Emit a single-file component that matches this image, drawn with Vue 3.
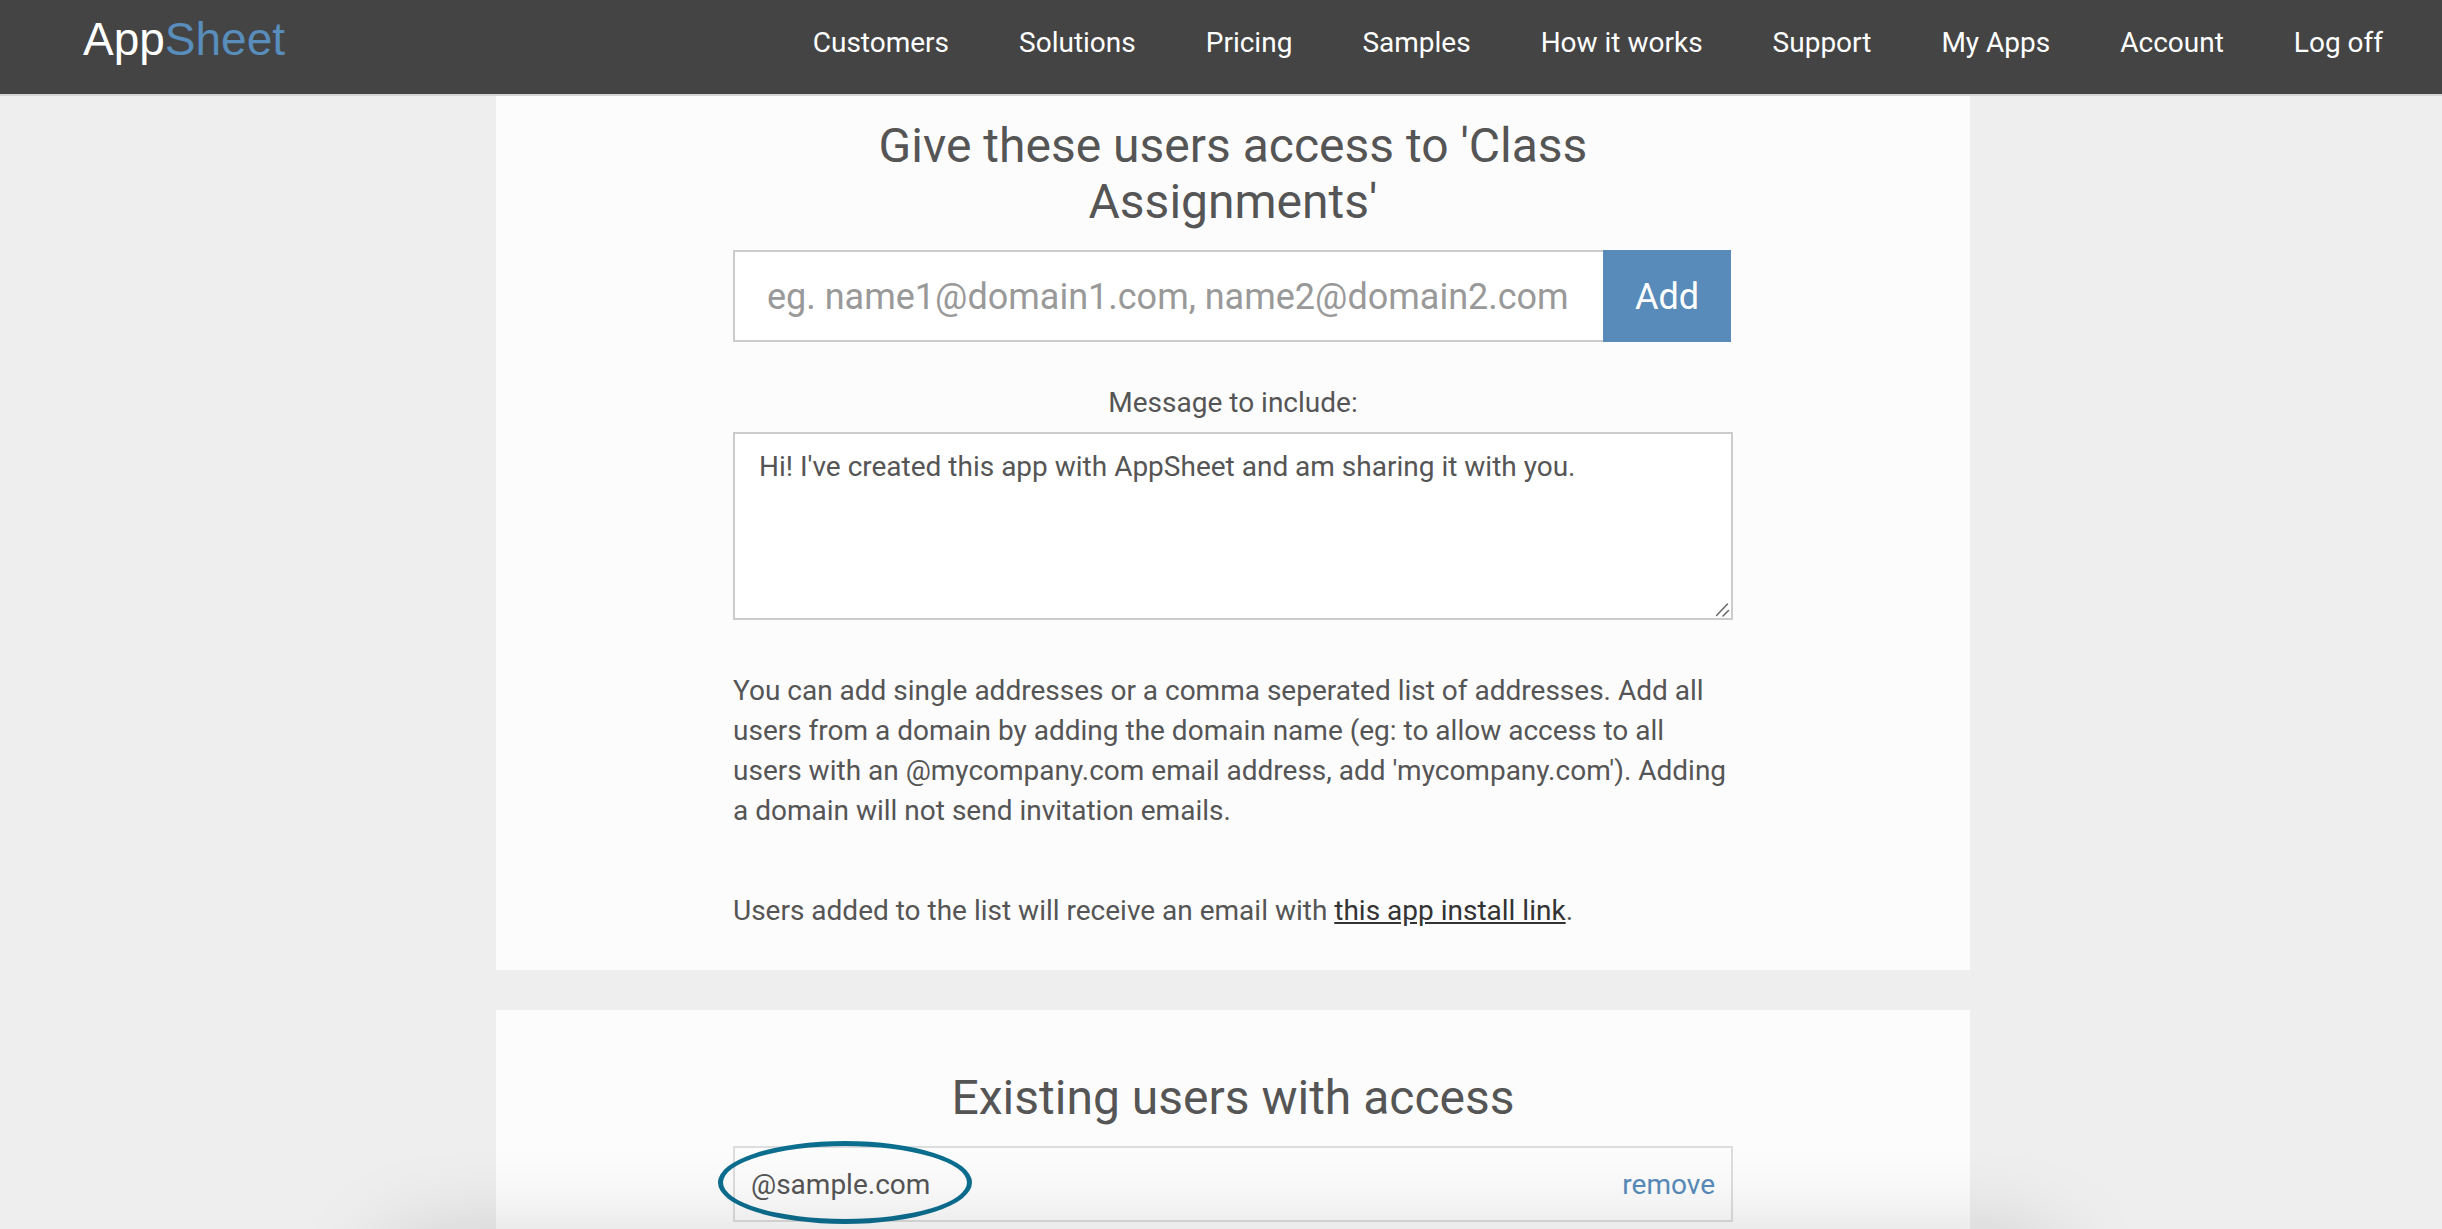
<script setup>
import { ref } from 'vue'

const links = [
  'Customers',
  'Solutions',
  'Pricing',
  'Samples',
  'How it works',
  'Support',
  'My Apps',
  'Account',
  'Log off',
]

const appName = 'Class Assignments'
const emails = ref('')
const message = ref("Hi! I've created this app with AppSheet and am sharing it with you.")
const users = ref(['@sample.com'])

function addUsers() {
  const added = emails.value.split(',').map((e) => e.trim()).filter(Boolean)
  users.value.push(...added)
  emails.value = ''
}

function removeUser(user) {
  users.value = users.value.filter((u) => u !== user)
}
</script>

<template>
  <div class="page">
    <header class="topbar">
      <a class="logo" href="#">App<span class="logo-accent">Sheet</span></a>
      <nav class="nav">
        <a v-for="link in links" :key="link" class="nav-link" href="#">{{ link }}</a>
      </nav>
    </header>

    <main class="main">
      <section class="panel">
        <div class="content">
          <h2 class="title">Give these users access to '{{ appName }}'</h2>
          <form class="add-form" @submit.prevent="addUsers">
            <input
              v-model="emails"
              class="email-input"
              type="text"
              aria-label="Email addresses"
              placeholder="eg. name1@domain1.com, name2@domain2.com"
            />
            <button class="add-button" type="submit">Add</button>
          </form>
          <label class="message-label" for="message">Message to include:</label>
          <textarea id="message" v-model="message" class="message"></textarea>
          <p class="hint">
            You can add single addresses or a comma seperated list of addresses. Add all users from
            a domain by adding the domain name (eg: to allow access to all users with an
            @mycompany.com email address, add 'mycompany.com'). Adding a domain will not send
            invitation emails.
          </p>
          <p class="hint">
            Users added to the list will receive an email with
            <a class="install-link" href="#">this app install link</a>.
          </p>
        </div>
      </section>

      <section class="panel panel-users">
        <div class="content">
          <h2 class="title">Existing users with access</h2>
          <ul class="users">
            <li v-for="(user, i) in users" :key="user" class="user">
              <span>{{ user }}</span>
              <a class="remove" href="#" @click.prevent="removeUser(user)">remove</a>
              <span v-if="i === 0" class="marker" aria-hidden="true"></span>
            </li>
          </ul>
        </div>
      </section>
    </main>

    <div class="bottom-shadow" aria-hidden="true"></div>
  </div>
</template>

<style>
body {
  background: #eee;
}
</style>

<style scoped>
.page {
  display: flex;
  flex-direction: column;
  min-height: 100vh;
  font-family: Roboto, "Liberation Sans", sans-serif;
  font-size: 28px;
  line-height: 40px;
  color: #555;
}

.page *,
.page {
  box-sizing: border-box;
}

.topbar {
  display: flex;
  justify-content: space-between;
  height: 96px;
  padding: 0 59px 0 83px;
  background: #444;
  background-clip: padding-box;
  border-bottom: 2px solid rgba(0, 0, 0, 0.1);
}

.logo {
  padding-top: 12px;
  font-family: "Liberation Sans", Arial, sans-serif;
  font-size: 46px;
  line-height: 54px;
  color: #fff;
  text-decoration: none;
}

.logo-accent {
  color: #588dbc;
}

.nav {
  display: flex;
  gap: 70px;
  padding-top: 23px;
}

.nav-link {
  color: #fff;
  text-decoration: none;
  white-space: nowrap;
}

.main {
  flex: 1;
  display: flex;
  flex-direction: column;
  align-items: center;
  gap: 40px;
  padding-left: 24px;
}

.panel {
  width: 100%;
  max-width: 1474px;
  padding: 22px 40px 39px;
  background: #fcfcfc;
}

.panel-users {
  flex: 1;
  padding-top: 60px;
  padding-bottom: 0;
}

.content {
  max-width: 1000px;
  margin: 0 auto;
}

.title {
  margin: 0 0 20px;
  padding: 0 100px;
  font-size: 48px;
  font-weight: 400;
  line-height: 56px;
  text-align: center;
}

.add-form {
  display: flex;
  height: 92px;
  margin: 0 2px 41px 0;
}

.email-input {
  flex: 1;
  min-width: 0;
  padding: 2px 32px 0;
  border: 2px solid #ccc;
  border-right: 0;
  border-radius: 0;
  background: #fff;
  font: inherit;
  font-size: 36px;
  color: #555;
  outline: 0;
}

.email-input::placeholder {
  color: #999;
  opacity: 1;
}

.add-button {
  width: 128px;
  padding: 2px 0 0;
  border: 0;
  background: #588bb9;
  font: inherit;
  font-size: 36px;
  color: #fff;
}

.message-label {
  display: block;
  margin-bottom: 9px;
  text-align: center;
}

.message {
  display: block;
  width: 100%;
  height: 188px;
  margin-bottom: 51px;
  padding: 13px 24px;
  border: 2px solid #ccc;
  border-radius: 0;
  background: #fff;
  font: inherit;
  color: inherit;
  resize: vertical;
  outline: 0;
}

.message::-webkit-resizer {
  background: url("data:image/svg+xml,%3Csvg xmlns='http://www.w3.org/2000/svg' width='15' height='15' viewBox='0 0 15 15'%3E%3Cpath d='M0.5 12.5L11.5 1M7 13L12.5 7.5' fill='none' stroke='%23666' stroke-width='1.5' stroke-linecap='round'/%3E%3C/svg%3E") no-repeat;
}

.hint {
  margin: 0;
}

.hint + .hint {
  margin-top: 60px;
}

.install-link {
  color: #333;
}

.users {
  margin: 0;
  padding: 0;
  list-style: none;
}

.user {
  position: relative;
  display: flex;
  justify-content: space-between;
  padding: 17px 16px 15px;
  border: 2px solid #ddd;
}

.remove {
  color: #588bb9;
  text-decoration: none;
}

/* Hand-drawn style ring that singles out the first user */
.marker {
  position: absolute;
  top: -7px;
  left: -17px;
  width: 254px;
  height: 83px;
  border: 5px solid #0c6e8f;
  border-radius: 50%;
  pointer-events: none;
}

/* Soft shade rising from the lower window edge */
.bottom-shadow {
  position: fixed;
  right: 16%;
  bottom: -220px;
  left: 16%;
  height: 200px;
  box-shadow: 0 0 100px rgba(0, 0, 0, 0.2);
  pointer-events: none;
}
</style>
